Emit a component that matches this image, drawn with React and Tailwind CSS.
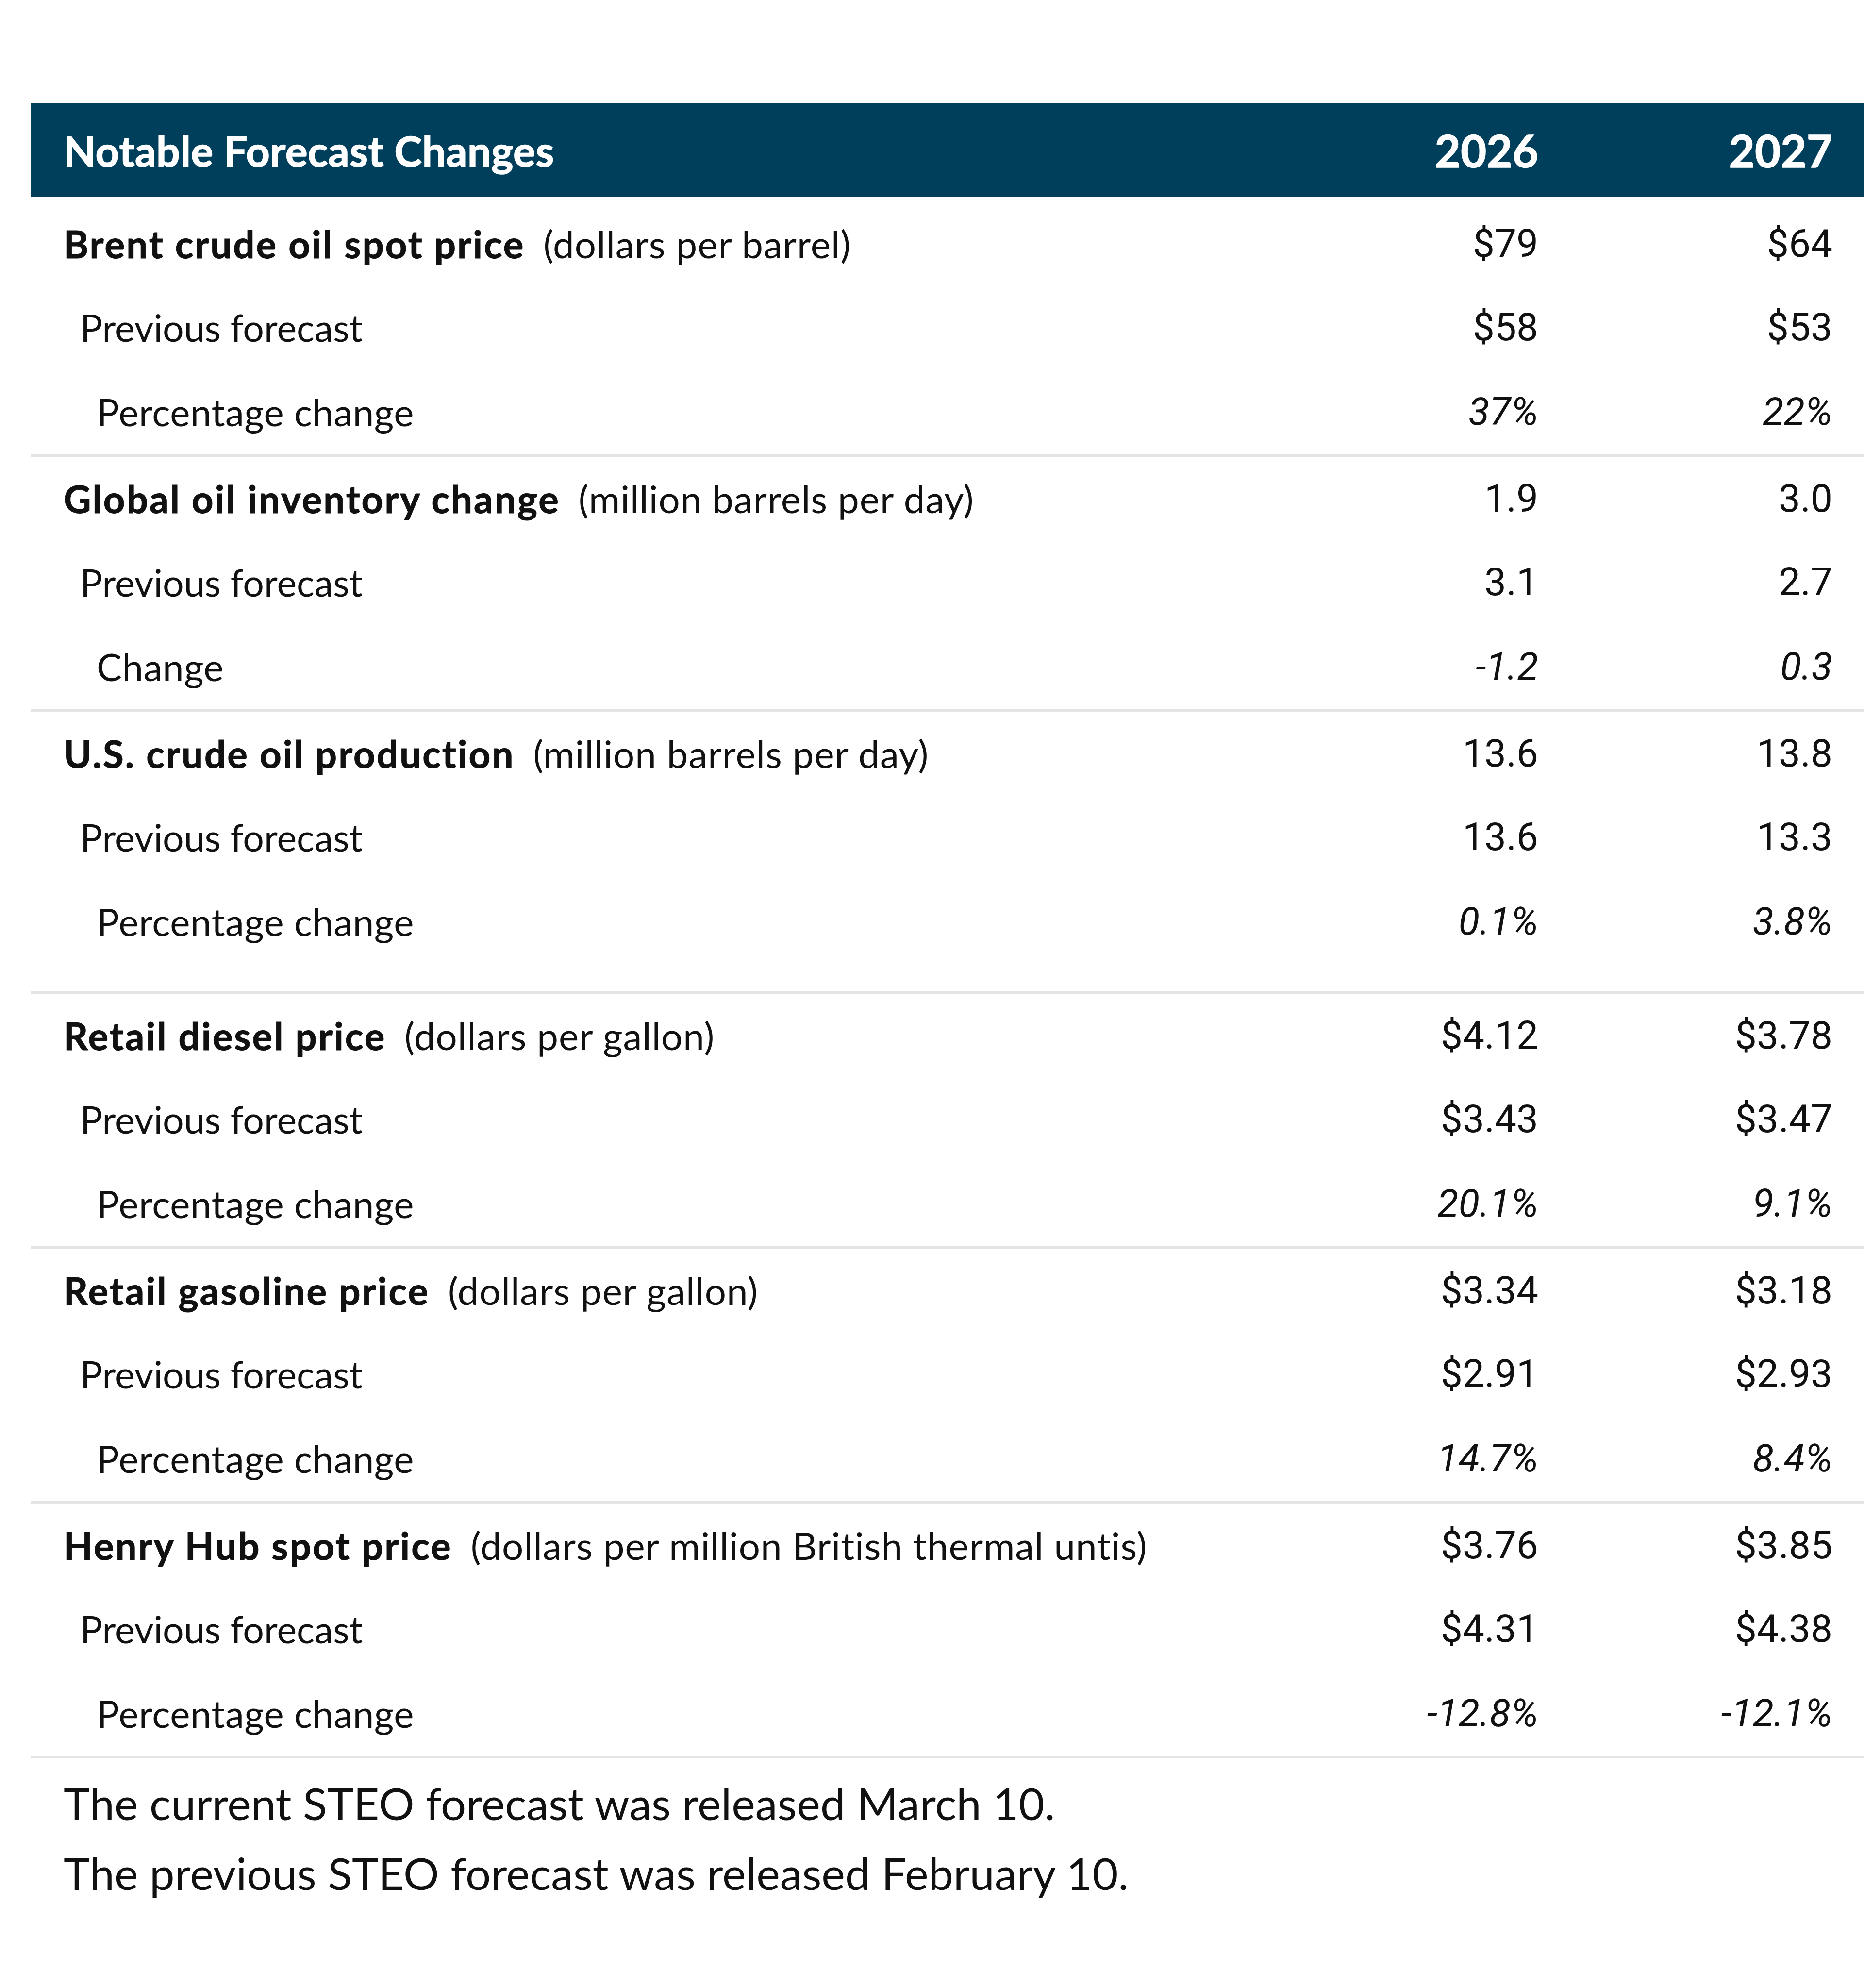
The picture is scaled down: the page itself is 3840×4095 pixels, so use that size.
import React from 'react';

const groups = [
  {
    title: 'Brent crude oil spot price',
    unit: '(dollars per barrel)',
    main: ['$79', '$64'],
    prev: ['$58', '$53'],
    changeLabel: 'Percentage change',
    change: ['37%', '22%'],
  },
  {
    title: 'Global oil inventory change',
    unit: '(million barrels per day)',
    main: ['1.9', '3.0'],
    prev: ['3.1', '2.7'],
    changeLabel: 'Change',
    change: ['-1.2', '0.3'],
  },
  {
    title: 'U.S. crude oil production',
    unit: '(million barrels per day)',
    main: ['13.6', '13.8'],
    prev: ['13.6', '13.3'],
    changeLabel: 'Percentage change',
    change: ['0.1%', '3.8%'],
    extra: true,
  },
  {
    title: 'Retail diesel price',
    unit: '(dollars per gallon)',
    main: ['$4.12', '$3.78'],
    prev: ['$3.43', '$3.47'],
    changeLabel: 'Percentage change',
    change: ['20.1%', '9.1%'],
  },
  {
    title: 'Retail gasoline price',
    unit: '(dollars per gallon)',
    main: ['$3.34', '$3.18'],
    prev: ['$2.91', '$2.93'],
    changeLabel: 'Percentage change',
    change: ['14.7%', '8.4%'],
  },
  {
    title: 'Henry Hub spot price',
    unit: '(dollars per million British thermal untis)',
    main: ['$3.76', '$3.85'],
    prev: ['$4.31', '$4.38'],
    changeLabel: 'Percentage change',
    change: ['-12.8%', '-12.1%'],
  },
];

function Row({ label, values, height, italic }) {
  return (
    <div className={`grid grid-cols-[1fr_300px_606px] items-center pr-[65px] ${height}`}>
      {label}
      {values.map((v, i) => (
        <div
          key={i}
          className={`text-right font-['Roboto',sans-serif] text-[80px] text-[#111] ${italic ? 'italic' : ''}`}
        >
          {v}
        </div>
      ))}
    </div>
  );
}

function Group({ g, first }) {
  return (
    <div
      className={`border-b-[5px] border-[#e3e4e6] ${first ? 'pt-[10px]' : ''} ${g.extra ? 'pb-[56px]' : ''}`}
    >
      <Row
        height="h-[172px]"
        values={g.main}
        label={
          <div className="pl-[68px] text-[78px] text-[#111] whitespace-nowrap">
            <span className="font-bold tracking-[3px] [-webkit-text-stroke:1px_#111]">{g.title}</span>
            <span className="ml-[38px] tracking-[1px]">{g.unit}</span>
          </div>
        }
      />
      <Row
        height="h-[172px]"
        values={g.prev}
        label={<div className="pl-[102px] text-[77px] text-[#111]">Previous forecast</div>}
      />
      <Row
        height="h-[176px]"
        italic
        values={g.change}
        label={<div className="pl-[136px] text-[78px] text-[#111] tracking-[0.5px]">{g.changeLabel}</div>}
      />
    </div>
  );
}

export default function App() {
  return (
    <div className="bg-white pt-[213px] pl-[63px] font-['Lato',sans-serif] leading-none">
      {/* Header bar */}
      <div className="grid grid-cols-[1fr_300px_606px] items-center h-[193px] bg-[#003f5c] pr-[65px] text-white font-bold [-webkit-text-stroke:1.5px_#fff]">
        <div className="pl-[68px] text-[86px] tracking-[0.5px]">Notable Forecast Changes</div>
        <div className="text-right text-[92px]">2026</div>
        <div className="text-right text-[92px]">2027</div>
      </div>

      {groups.map((g, i) => (
        <Group key={g.title} g={g} first={i === 0} />
      ))}

      {/* Footnote */}
      <div className="pl-[68px] pt-[20px] text-[92px] leading-[144px] text-[#111]">
        <p>The current STEO forecast was released March 10.</p>
        <p>The previous STEO forecast was released February 10.</p>
      </div>
    </div>
  );
}
